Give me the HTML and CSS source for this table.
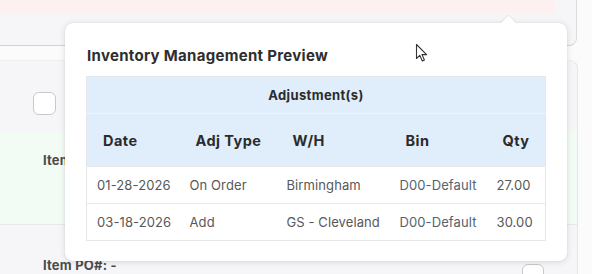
FILE: index.html
```html
<!DOCTYPE html>
<html>
<head>
<meta charset="utf-8">
<link rel="stylesheet" href="styles.css">
</head>
<body>
<div class="page">
  <div class="topcard"><div class="pink"></div></div>
  <div class="card2">
    <div class="checkrow"><span class="checkbox"></span></div>
    <div class="green"><span class="label">Item Description</span></div>
    <div class="porow"><span class="label">Item PO#: -</span><span class="checkbox small"></span></div>
  </div>
</div>

<div class="popover">
  <h3 class="pop-title">Inventory Management Preview</h3>
  <table class="adj">
    <colgroup>
      <col class="c1"><col class="c2"><col class="c3"><col class="c4"><col class="c5">
    </colgroup>
    <thead>
      <tr class="group"><th colspan="5">Adjustment(s)</th></tr>
      <tr class="cols"><th>Date</th><th>Adj Type</th><th>W/H</th><th>Bin</th><th>Qty</th></tr>
    </thead>
    <tbody>
      <tr><td>01-28-2026</td><td>On Order</td><td>Birmingham</td><td class="bin">D00-Default</td><td>27.00</td></tr>
      <tr><td>03-18-2026</td><td>Add</td><td>GS - Cleveland</td><td class="bin">D00-Default</td><td>30.00</td></tr>
    </tbody>
  </table>
</div>

<svg class="cursor" width="14" height="20" viewBox="0 0 14 20">
  <path d="M1.5 1.5 L1.5 15.5 L4.8 12.4 L7.3 18 L9.4 17 L7 11.6 L11.6 11.6 Z" fill="#fff" stroke="#333" stroke-width="1.1" stroke-linejoin="round"/>
</svg>
</body>
</html>
```

FILE: styles.css
```css
* { box-sizing: border-box; }
html, body { margin: 0; padding: 0; }
body {
  width: 592px;
  height: 274px;
  overflow: hidden;
  background: #fbfbfc;
  font-family: Inter, "Noto Sans", sans-serif;
  position: relative;
}
.page { display: flex; flex-direction: column; }
.topcard {
  flex-shrink: 0;
  width: 577px;
  height: 46px;
  background: #f6f6f8;
  border-right: 1px solid #dcdce0;
  border-bottom: 1px solid #d2d2d6;
  border-bottom-right-radius: 8px;
}
.pink { width: 555px; height: 13px; background: #fdf0f1; }
.card2 {
  flex-shrink: 0;
  margin-top: 14px;
  width: 578px;
  height: 214px;
  overflow: hidden;
  background: #f6f6f8;
  border-right: 1px solid #e6e6ea;
  border-top: 1px solid #efeff2;
  border-top-right-radius: 8px;
  display: flex;
  flex-direction: column;
}
.checkrow { flex-shrink: 0; height: 71px; padding: 31px 0 0 33px; }
.checkbox {
  display: block;
  width: 23px;
  height: 23px;
  border: 1.5px solid #c9c9cd;
  border-radius: 6px;
  background: #fff;
}
.green {
  flex-shrink: 0;
  height: 93px;
  background: #f3fbf5;
  border-bottom: 1px solid #e6e8ea;
  padding: 17px 0 0 43px;
}
.label { font-size: 13px; font-weight: 700; color: #4a4a4a; letter-spacing: 0.2px; }
.porow {
  flex-shrink: 0;
  display: flex;
  justify-content: space-between;
  align-items: flex-start;
  padding: 32px 33px 0 43px;
}
.checkbox.small { width: 22px; height: 22px; margin-top: 7px; }

.popover {
  position: absolute;
  left: 65px;
  top: 23px;
  width: 502px;
  height: 238px;
  background: #fff;
  border-radius: 8px;
  box-shadow: 0 1px 6px rgba(0,0,0,0.13), 0 0 1px rgba(0,0,0,0.15);
  padding: 22px 21px 0 21px;
}
.popover::before {
  content: "";
  position: absolute;
  left: 438px;
  top: -5px;
  width: 11px;
  height: 11px;
  background: #fff;
  transform: rotate(45deg);
  box-shadow: -1px -1px 2px rgba(0,0,0,0.06);
}
.pop-title {
  position: relative;
  margin: 0 0 9px 1px;
  font-size: 15px;
  line-height: 22px;
  font-weight: 700;
  letter-spacing: 0.3px;
  color: #2e2e2e;
}
.adj {
  width: 459px;
  table-layout: fixed;
  border-collapse: collapse;
  border: 1px solid #e4e6ea;
  font-size: 13px;
}
.c1 { width: 93px; } .c2 { width: 97px; } .c3 { width: 113px; } .c4 { width: 97px; } .c5 { width: 59px; }
.adj th { background: #e0eefb; color: #2b2b2b; font-weight: 700; text-align: left; }
.group th { height: 37px; text-align: center; font-size: 13px; letter-spacing: 0.35px; }
.cols th { height: 53px; padding-left: 16px; font-size: 14.5px; letter-spacing: 0.45px; border-top: 1px solid #ecf4fd; }
.adj td {
  height: 37px;
  padding: 0 0 0 10px;
  color: #585858;
  border-top: 1px solid #e8e9ec;
  white-space: nowrap;
  letter-spacing: 0.1px;
}
.adj td.bin { color: #52636f; }
.cursor { position: absolute; left: 415px; top: 43px; }
```
